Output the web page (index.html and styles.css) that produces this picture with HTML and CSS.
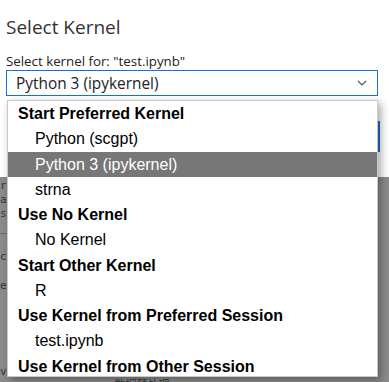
FILE: index.html
```html
<!DOCTYPE html>
<html lang="en">
<head>
    <meta charset="UTF-8">
    <meta name="viewport" content="width=device-width, initial-scale=1.0">
    <title>Select Kernel</title>
    <link rel="stylesheet" href="styles.css">
</head>
<body>

    <div class="dialog">
        <h2 class="dialog-title">Select Kernel</h2>
        <label class="kernel-label" for="kernel-select">Select kernel for: "test.ipynb"</label>

        <!-- Select box (open) -->
        <div class="kernel-select" id="kernel-select">
            <span>Python 3 (ipykernel)</span>
            <svg class="chevron" width="10" height="6" viewBox="0 0 10 6">
                <polyline points="1,1 5,5 9,1" fill="none" stroke="#555" stroke-width="1.2"/>
            </svg>
        </div>

        <!-- Dialog buttons, behind the open list -->
        <div class="dialog-footer">
            <button class="btn-cancel">Cancel</button>
            <button class="btn-select">Select</button>
        </div>

        <!-- Open dropdown list -->
        <ul class="kernel-list">
            <li class="group">Start Preferred Kernel</li>
            <li class="option">Python (scgpt)</li>
            <li class="option selected">Python 3 (ipykernel)</li>
            <li class="option">strna</li>
            <li class="group">Use No Kernel</li>
            <li class="option">No Kernel</li>
            <li class="group">Start Other Kernel</li>
            <li class="option">R</li>
            <li class="group">Use Kernel from Preferred Session</li>
            <li class="option">test.ipynb</li>
            <li class="group">Use Kernel from Other Session</li>
        </ul>
    </div>

    <!-- Dimmed notebook behind the dialog -->
    <div class="backdrop">
        <p>ro</p>
        <p>ac</p>
        <p>sf</p>
        <p>_</p>
        <p class="gap">ca</p>
        <p class="gap">er</p>
        <p class="far">ve</p>
        <p class="last">rs  s  s  a  sa  数据预处理</p>
    </div>

</body>
</html>
```

FILE: styles.css
```css
:root {
    --accent: #1a6fd6;
    --backdrop: #8b8b8b;
    --highlight: #777777;
    --txt-color: #222;
}

body {
    margin: 0;
    width: 389px;
    height: 382px;
    overflow: hidden;
    background-color: var(--backdrop);
    font-family: 'Open Sans', sans-serif;
}

.dialog {
    position: relative;
    height: 177px;
    box-sizing: border-box;
    padding: 0 11px 0 6px;
    background-color: #fff;
}

.dialog-title {
    margin: 0;
    padding-top: 14px;
    font-size: 19px;
    font-weight: normal;
    line-height: 26px;
    color: #333;
}

.kernel-label {
    display: block;
    margin: 13px 0 1px;
    font-size: 13.3px;
    line-height: 16px;
    color: var(--txt-color);
}

.kernel-select {
    display: flex;
    align-items: center;
    justify-content: space-between;
    height: 26px;
    box-sizing: border-box;
    padding: 0 10px 0 9px;
    border: 1px solid var(--accent);
    font-size: 15.4px;
    color: var(--txt-color);
}

.dialog-footer {
    display: flex;
    justify-content: flex-end;
    gap: 8px;
    margin: 25px -2px 0 0;
}

.dialog-footer button {
    height: 31px;
    padding: 0 16px;
    font-family: 'Open Sans', sans-serif;
    font-size: 13px;
    background-color: #fff;
    border: 1px solid #bbb;
}

.dialog-footer .btn-select {
    border: 2px solid var(--accent);
}

/* open list lies over the dialog */
.kernel-list {
    position: absolute;
    top: 100px;
    left: 7px;
    width: 371px;
    height: 277px;
    box-sizing: border-box;
    margin: 0;
    padding: 0;
    list-style: none;
    background-color: #fff;
    border: 1px solid #c9c9c9;
    box-shadow: 3px 3px 8px rgba(0, 0, 0, 0.35);
    font-family: 'Liberation Sans', Arial, sans-serif;
    font-size: 16px;
    color: #000;
}

.kernel-list li {
    height: 25.25px;
    line-height: 25.25px;
    white-space: nowrap;
}

.kernel-list .group {
    padding-left: 10px;
    font-weight: bold;
}

.kernel-list .option {
    padding-left: 27px;
}

.kernel-list .selected {
    background-color: var(--highlight);
    color: #fff;
}

.backdrop {
    padding-top: 2px;
    font-family: 'DejaVu Sans Mono', 'Noto Sans CJK SC', monospace;
    font-size: 11px;
    color: #2c3b3b;
}

.backdrop p {
    margin: 0;
    line-height: 14px;
    white-space: pre;
}

.backdrop .gap {
    margin-top: 15px;
}

.backdrop .far {
    margin-top: 72px;
}

.backdrop .last {
    padding-left: 2px;
}
```
